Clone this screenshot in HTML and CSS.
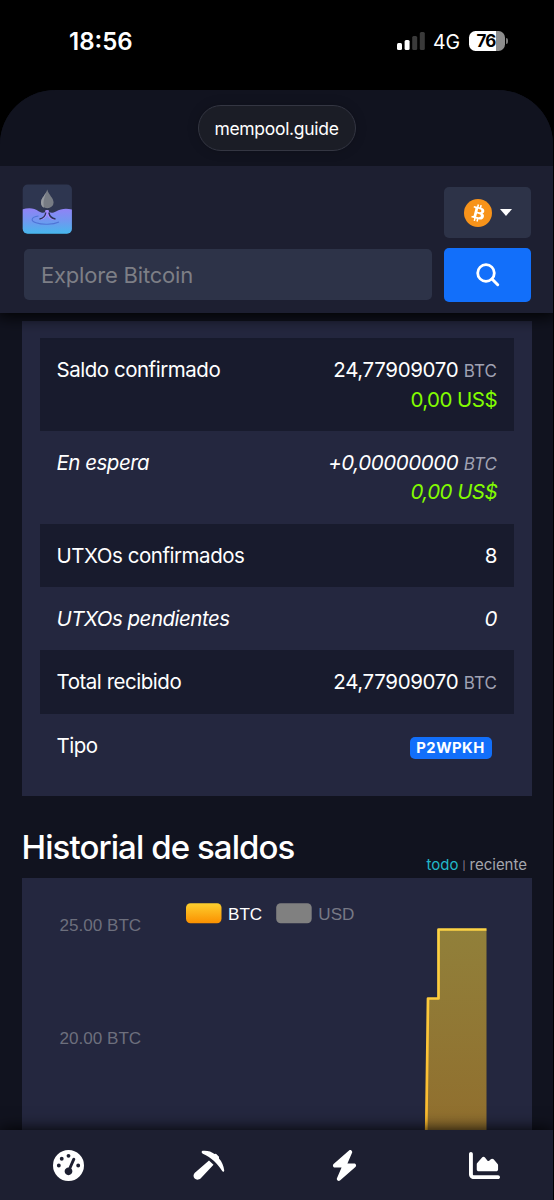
FILE: index.html
```html
<!DOCTYPE html>
<html lang="es">
<head>
<meta charset="utf-8">
<title>mempool.guide</title>
<link rel="stylesheet" href="styles.css">
</head>
<body>
<div class="status">
  <span class="clock">18:56</span>
  <div class="indicators">
    <svg class="signal" width="28" height="18" viewBox="0 0 28 18"><rect x="0" y="11" width="5" height="7" rx="1.5" fill="#fff"/><rect x="7.6" y="8" width="5" height="10" rx="1.5" fill="#fff"/><rect x="15.2" y="4" width="5" height="14" rx="1.5" fill="#3a3a3a"/><rect x="22.8" y="0" width="5" height="18" rx="1.5" fill="#3a3a3a"/></svg>
    <span class="network">4G</span>
    <div class="battery"><span class="level">76</span><i class="cap"></i></div>
  </div>
</div>
<div class="sheet">
  <div class="urlbar"><div class="url">mempool.guide</div></div>
  <header class="header">
    <div class="brand-row">
      <svg class="logo" width="50" height="50" viewBox="0 0 50 50">
        <defs>
          <linearGradient id="water" x1="0" y1="0" x2="0" y2="1"><stop offset="0" stop-color="#9182f6"/><stop offset=".5" stop-color="#7098f0"/><stop offset="1" stop-color="#45b8ed"/></linearGradient>
          <clipPath id="tile"><rect x=".7" y=".5" width="49.2" height="49.2" rx="5"/></clipPath>
        </defs>
        <g clip-path="url(#tile)">
          <rect width="50" height="50" fill="#2e3650"/>
          <path d="M0 25.500C7 23.500 12 24 17 27.500C21 29.500 23 29 24 26.500h2.500C27 29 30 29.500 34 27.500C39 24.500 44 24 50 25.500V50H0z" fill="url(#water)"/>
          <path d="M23.500 26C23 32 20 35 17 36.200c4-.6 7.500-2 8-6c1 4 4 5.800 9 5.800c-5-1.700-7-5-7.500-10" fill="#a58bff"/>
          <path d="M23.800 28.500C23.300 32 21 34.500 17.500 35M26.800 28.500C27.500 32 30 34.500 33.500 35" fill="none" stroke="#2b3458" stroke-width="1.400"/>
          <path d="M16.500 32C9 33 8 37 14 38.800C20 41 31 40.800 37 38" fill="none" stroke="#4f74d6" stroke-width="1.100"/>
          <path d="M25.200 5.500C23.700 11 19 14 19 18.500a6.300 5.800 0 0 0 12.600 0C31.600 14 26.700 11 25.200 5.500z" fill="#777c84"/>
          <path d="M25.200 5.500C23.700 11 19 14 19 18.500q0 4 3 5.300C20.500 16 23.200 12 25.200 5.500z" fill="#969aa0"/>
        </g>
      </svg>
      <button class="network-btn">
        <svg width="28" height="28" viewBox="0 0 32 32"><circle cx="16" cy="16" r="16" fill="#f7931a"/><path fill="#fff" d="M23.189 14.020c.314-2.096-1.283-3.223-3.465-3.975l.708-2.840-1.728-.430-.690 2.765c-.454-.114-.920-.220-1.385-.326l.695-2.783L15.596 6l-.708 2.839c-.376-.086-.746-.170-1.104-.260l.002-.009-2.384-.595-.460 1.846s1.283.294 1.256.312c.700.175.826.638.805 1.006l-.806 3.235c.048.012.110.030.180.057l-.183-.045-1.130 4.532c-.086.212-.303.531-.793.410.018.025-1.256-.313-1.256-.313l-.858 1.978 2.250.561c.418.105.828.215 1.231.318l-.715 2.872 1.727.430.708-2.840c.472.127.930.245 1.378.357l-.706 2.828 1.728.430.715-2.866c2.948.558 5.164.333 6.097-2.333.752-2.146-.037-3.385-1.588-4.192 1.130-.260 1.980-1.003 2.207-2.538zm-3.950 5.538c-.533 2.147-4.148.986-5.320.695l.950-3.805c1.172.293 4.929.872 4.370 3.110zm.535-5.569c-.487 1.953-3.495.960-4.470.717l.860-3.450c.975.243 4.118.696 3.610 2.733z"/></svg>
        <i class="caret"></i>
      </button>
    </div>
    <div class="search-row">
      <div class="search-field">Explore Bitcoin</div>
      <button class="search-btn"><svg width="24" height="24" viewBox="0 0 24 24" fill="none" stroke="#fff"><circle cx="10" cy="10" r="8.300" stroke-width="2.800"/><path d="M16 16L21.700 21.700" stroke-width="3" stroke-linecap="round"/></svg></button>
    </div>
  </header>
  <main class="content">
    <section class="panel summary">
      <div class="row"><span class="label">Saldo confirmado</span><div class="value"><div>24,77909070 <small>BTC</small></div><div class="fiat">0,00 US$</div></div></div>
      <div class="row pending"><span class="label">En espera</span><div class="value"><div>+0,00000000 <small>BTC</small></div><div class="fiat">0,00 US$</div></div></div>
      <div class="row"><span class="label">UTXOs confirmados</span><div class="value">8</div></div>
      <div class="row pending"><span class="label">UTXOs pendientes</span><div class="value">0</div></div>
      <div class="row"><span class="label">Total recibido</span><div class="value">24,77909070 <small>BTC</small></div></div>
      <div class="row"><span class="label">Tipo</span><span class="badge">P2WPKH</span></div>
    </section>
    <div class="title-row">
      <h2>Historial de saldos</h2>
      <div class="range"><span class="active">todo</span><span class="bar">|</span><span>reciente</span></div>
    </div>
    <section class="panel chart">
      <svg width="511" height="270" viewBox="0 0 511 270">
        <defs>
          <linearGradient id="gold" x1="0" y1="0" x2="0" y2="1"><stop offset="0" stop-color="#fdd02f"/><stop offset="1" stop-color="#fb9000"/></linearGradient>
          <linearGradient id="area" gradientUnits="userSpaceOnUse" x1="0" y1="51" x2="0" y2="500"><stop offset="0" stop-color="#fdd835"/><stop offset="1" stop-color="#fb8c00"/></linearGradient>
          <linearGradient id="stroke" gradientUnits="userSpaceOnUse" x1="0" y1="51" x2="0" y2="500"><stop offset="0" stop-color="#fdd344"/><stop offset="1" stop-color="#fb9a10"/></linearGradient>
        </defs>
        <rect x="164" y="25.200" width="35.500" height="20" rx="4.500" fill="url(#gold)"/>
        <text class="legend" x="206" y="42">BTC</text>
        <rect x="254.200" y="25.200" width="35.500" height="20" rx="4.500" fill="#808080"/>
        <text class="legend off" x="296.300" y="42">USD</text>
        <text class="axis" x="37.500" y="53">25.00 BTC</text>
        <text class="axis" x="37.500" y="165.700">20.00 BTC</text>
        <path d="M464.500 51.500H416.500V120.500H406L404 270H464.500z" fill="url(#area)" fill-opacity=".5"/>
        <path d="M464.500 51.500H416.500V120.500H406L404 270" fill="none" stroke="url(#stroke)" stroke-width="2.700" stroke-linejoin="round"/>
      </svg>
    </section>
  </main>
  <nav class="tabs">
    <svg width="31" height="31" viewBox="0 0 512 512"><path d="M0 256a256 256 0 1 1 512 0A256 256 0 1 1 0 256zM288 96a32 32 0 1 0 -64 0 32 32 0 1 0 64 0zM256 416c35.300 0 64-28.700 64-64c0-17.400-6.900-33.100-18.100-44.600L366 161.700c5.300-12.100-.2-26.300-12.300-31.600s-26.300 .2-31.600 12.300L257.900 288c-.6 0-1.300 0-1.900 0c-35.300 0-64 28.700-64 64s28.700 64 64 64zM176 144a32 32 0 1 0 -64 0 32 32 0 1 0 64 0zM96 288a32 32 0 1 0 0-64 32 32 0 1 0 0 64zm352-32a32 32 0 1 0 -64 0 32 32 0 1 0 64 0z"/></svg>
    <svg width="34" height="32" viewBox="0 0 34 32"><path d="M10.600 1.800C15 1.300 19.500 2.400 22.500 5L24 4.700L27 7.700V9.500C30 12.500 31.600 17 32.200 21.300C32.400 23 30.800 23.300 30.200 22C28 18.500 25.500 15.500 22 12C19 9.300 15 6.800 10.800 4.800C9.200 4 9.500 2 10.600 1.800zM17 11.500L21.500 15.800L8.800 29.300C4.500 33.200-.8 28.300 2.600 24z"/></svg>
    <svg class="bolt" width="27" height="31" viewBox="0 0 448 512"><path d="M349.400 44.600c5.900-13.700 1.500-29.700-10.600-38.500s-28.600-8-39.900 1.800l-256 224c-10 8.800-13.600 22.900-8.900 35.300S50.700 288 64 288H175.500L98.600 467.400c-5.900 13.700-1.500 29.700 10.600 38.500s28.600 8 39.900-1.800l256-224c10-8.800 13.600-22.900 8.900-35.300s-16.600-20.700-30-20.700H272.500L349.400 44.600z"/></svg>
    <svg width="31" height="31" viewBox="0 0 512 512"><path d="M64 64c0-17.700-14.300-32-32-32S0 46.300 0 64V400c0 44.200 35.800 80 80 80H480c17.700 0 32-14.300 32-32s-14.300-32-32-32H80c-8.800 0-16-7.200-16-16V64zm96 288H448c17.700 0 32-14.300 32-32V251.800c0-7.600-2.700-15-7.700-20.800l-65.800-76.800c-12.100-14.200-33.700-15-46.900-1.800l-21 21c-10 10-26.400 9.200-35.400-1.600l-39.200-47c-12.600-15.100-35.700-15.400-48.700-.6L135.900 215c-5.100 5.800-7.900 13.300-7.900 21.100v84c0 17.700 14.300 32 32 32z"/></svg>
  </nav>
</div>
</body>
</html>
```
FILE: styles.css
```css
* { box-sizing: border-box; }
body { margin: 0; width: 554px; height: 1200px; background: #000; color: #fff; font-family: Inter, sans-serif; display: flex; flex-direction: column; overflow: hidden; }
button { border: 0; padding: 0; font: inherit; color: inherit; }
svg { display: block; flex: none; }

.status { height: 90px; padding: 27px 49px 0 69px; display: flex; justify-content: space-between; align-items: flex-start; }
.clock { font-size: 24px; font-weight: 600; line-height: 30px; letter-spacing: 0; }
.indicators { display: flex; align-items: center; height: 28px; }
.network { font-size: 19.5px; margin-left: 8.5px; line-height: 28px; padding-top: 1px; letter-spacing: -.1px; }
.battery { position: relative; margin-left: 9px; width: 36px; height: 20px; border-radius: 6.5px; background: linear-gradient(to right, #fff 75%, #8d8d8d 75%); color: #000; text-align: center; }
.level { display: block; font-size: 17px; font-weight: 700; line-height: 21px; letter-spacing: -.8px; padding-right: 2px; }
.cap { position: absolute; left: 37px; top: 7px; width: 2px; height: 6px; border-radius: 0 2px 2px 0; background: #777; }

.sheet { flex: 1; min-height: 0; display: flex; flex-direction: column; background: #11131f; border-radius: 56px 56px 0 0 / 54px 54px 0 0; overflow: hidden; margin: 0 1px 0 0; }
.urlbar { height: 76px; flex: none; display: flex; justify-content: center; padding-top: 15px; background: #11131f; position: relative; z-index: 2; }
.url { width: 158px; height: 46px; border: 1px solid #343642; border-radius: 23px; background: #1b1d26; box-shadow: 0 0 12px rgba(0,0,0,.18); text-align: center; font-size: 17.5px; line-height: 45px; letter-spacing: -.3px; }

.header { height: 147px; flex: none; padding: 18px 22px 0 22px; background: #1d1f31; box-shadow: 0 0 16px 3px #000; position: relative; z-index: 1; }
.brand-row { display: flex; justify-content: space-between; height: 64px; }
.network-btn { width: 87px; height: 51px; margin-top: 3px; border-radius: 5px; background: #2d3348; display: flex; align-items: center; justify-content: center; gap: 8px; }
.caret { border: 6px solid transparent; border-top: 7px solid #fff; border-bottom: 0; }
.search-row { display: flex; gap: 12.5px; padding-left: 2px; align-items: flex-start; }
.search-field { flex: 1; height: 51px; margin-top: 1px; border-radius: 5px; background: #2d3348; color: #7d7f86; font-size: 22px; line-height: 52px; padding-left: 17px; letter-spacing: -.2px; }
.search-btn { width: 87px; height: 53.5px; border-radius: 5px; background: #126ffa; display: flex; align-items: center; justify-content: center; }

.content { flex: 1; min-height: 0; overflow: hidden; padding: 8px 21px 0 21.5px; }
.panel { background: #24273f; }
.summary { padding: 17.4px 18px 18px; height: 475px; }
.row { display: flex; justify-content: space-between; padding: 17px 17px 17px 17px; font-size: 20.5px; line-height: 29.35px; }
.row:nth-child(odd) { background: #181b2d; }
.pending { font-style: italic; }
.label { letter-spacing: -.47px; }
.value { text-align: right; letter-spacing: -.36px; }
.value small { font-size: 17px; line-height: 1; color: #a0a2b3; letter-spacing: .1px; }
.fiat { color: #83fd00; letter-spacing: -.55px; }
.pending .value { letter-spacing: -.42px; }
.pending .label { letter-spacing: -.5px; }
.badge { margin: 6px 5.5px 0 0; width: 82px; height: 22px; border-radius: 5px; background: #126ffa; font-size: 14.800px; font-weight: 700; line-height: 22.500px; text-align: center; letter-spacing: .5px; }

.title-row { display: flex; justify-content: space-between; height: 82px; padding: 30px 5px 0 0; }
h2 { margin: 0; font-size: 33px; font-weight: 500; line-height: 42px; letter-spacing: -.92px; }
.range { font-size: 15px; line-height: 20px; padding-top: 29px; color: #a5a6ad; display: flex; gap: 4px; }
.range .active { color: #22b8c9; }
.range .bar { font-size: 9px; line-height: 22px; }

.chart { height: 300px; }
.legend { font: 17.100px "Liberation Sans", sans-serif; fill: #fff; }
.legend.off { fill: #777985; }
.axis { font: 17.100px "Liberation Sans", sans-serif; fill: #6d6f7d; }

.tabs { height: 70px; flex: none; background: #1d1f31; box-shadow: 0 0 16px #000; position: relative; display: flex; justify-content: space-between; align-items: center; padding: 0 53px 0 53px; }
.tabs svg { fill: #fff; }
.tabs .bolt { margin: 0 3.5px 0 -3.5px; }
```
